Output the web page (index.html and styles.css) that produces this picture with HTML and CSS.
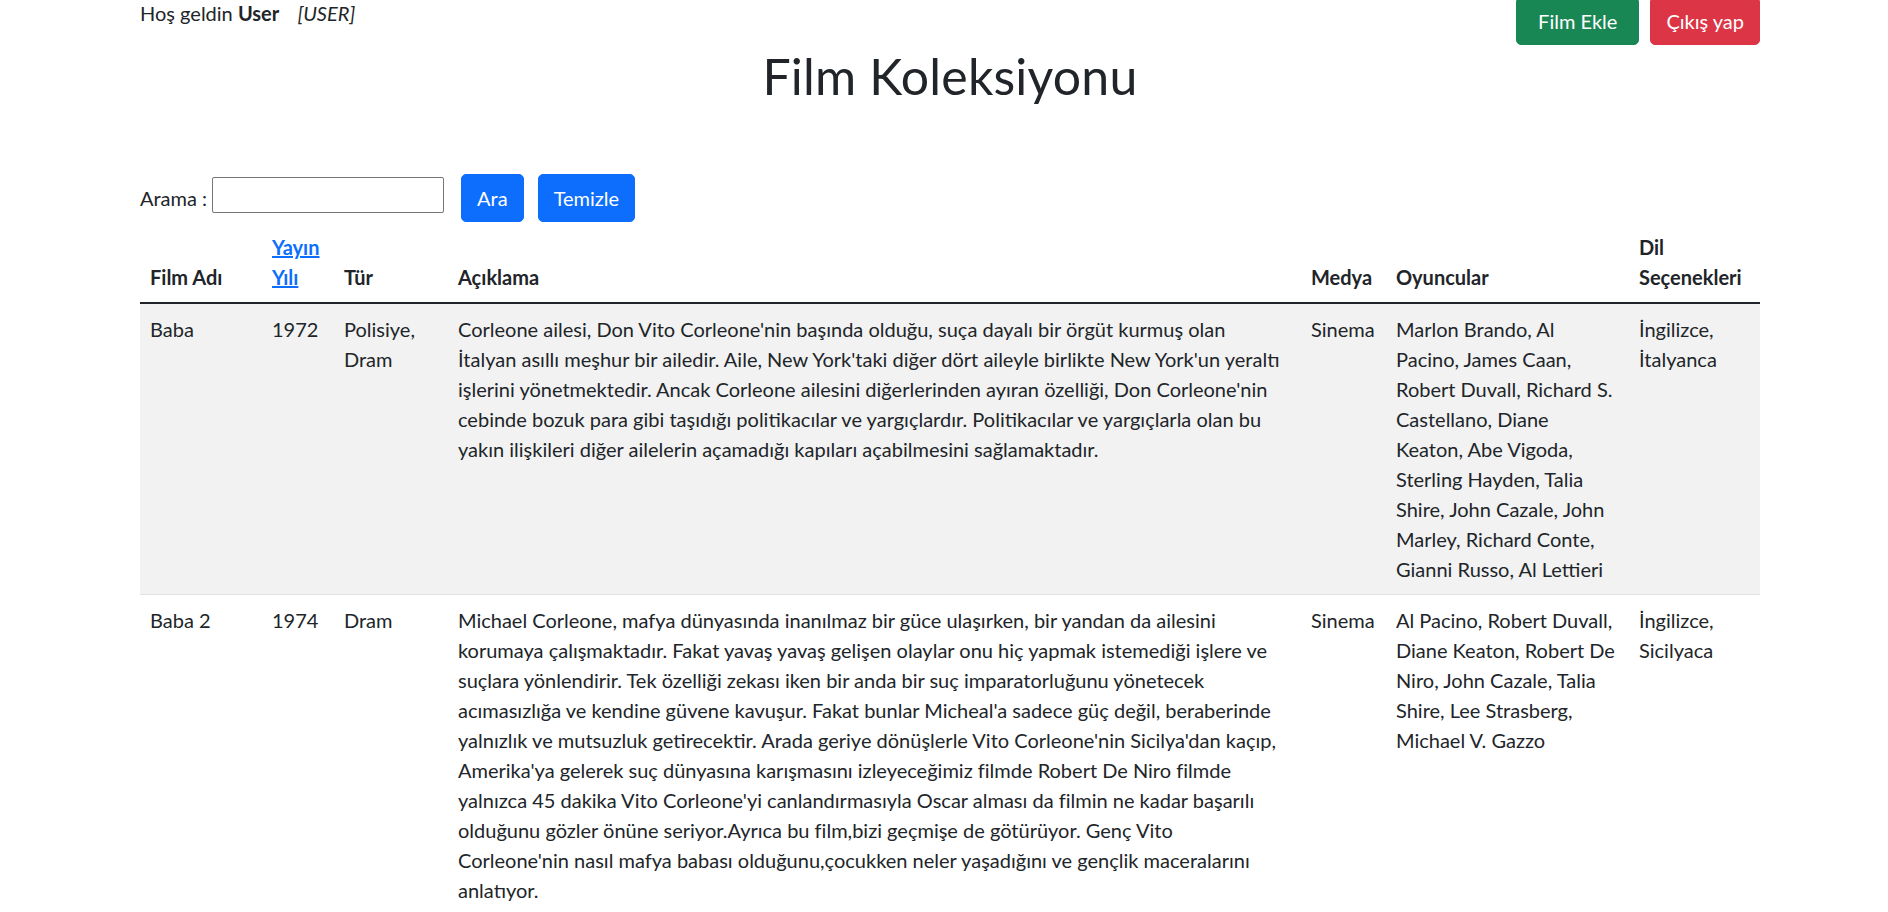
FILE: index.html
```html
<!DOCTYPE html>
<html lang="tr">
<head>
<meta charset="utf-8">
<title>Film Koleksiyonu</title>
<link rel="stylesheet" href="styles.css">
</head>
<body>
<div class="page">
  <div class="topbar">
    <div class="greeting">Hoş geldin <b>User</b> <i class="role">[USER]</i></div>
    <div class="actions">
      <a class="btn btn-success btn-add" href="#">Film Ekle</a>
      <a class="btn btn-danger" href="#">Çıkış yap</a>
    </div>
  </div>

  <h1 class="title">Film Koleksiyonu</h1>

  <form class="search">
    <label class="search-label" for="q">Arama :</label>
    <input class="search-input" id="q" type="text">
    <button class="btn btn-primary" type="button">Ara</button>
    <button class="btn btn-primary" type="button">Temizle</button>
  </form>

  <table class="films">
    <colgroup>
      <col class="c-name">
      <col class="c-year">
      <col class="c-genre">
      <col class="c-desc">
      <col class="c-media">
      <col class="c-cast">
      <col class="c-lang">
    </colgroup>
    <thead>
      <tr>
        <th>Film Adı</th>
        <th><a class="sort" href="#">Yayın Yılı</a></th>
        <th>Tür</th>
        <th>Açıklama</th>
        <th>Medya</th>
        <th>Oyuncular</th>
        <th>Dil Seçenekleri</th>
      </tr>
    </thead>
    <tbody>
      <tr class="striped">
        <td>Baba</td>
        <td>1972</td>
        <td>Polisiye, Dram</td>
        <td class="desc">Corleone ailesi, Don Vito Corleone'nin başında olduğu, suça dayalı bir örgüt kurmuş olan İtalyan asıllı meşhur bir ailedir. Aile, New York'taki diğer dört aileyle birlikte New York'un yeraltı işlerini yönetmektedir. Ancak Corleone ailesini diğerlerinden ayıran özelliği, Don Corleone'nin cebinde bozuk para gibi taşıdığı politikacılar ve yargıçlardır. Politikacılar ve yargıçlarla olan bu yakın ilişkileri diğer ailelerin açamadığı kapıları açabilmesini sağlamaktadır.</td>
        <td>Sinema</td>
        <td>Marlon Brando, Al Pacino, James Caan, Robert Duvall, Richard S. Castellano, Diane Keaton, Abe Vigoda, Sterling Hayden, Talia Shire, John Cazale, John Marley, Richard Conte, Gianni Russo, Al Lettieri</td>
        <td>İngilizce, İtalyanca</td>
      </tr>
      <tr>
        <td>Baba 2</td>
        <td>1974</td>
        <td>Dram</td>
        <td class="desc">Michael Corleone, mafya dünyasında inanılmaz bir güce ulaşırken, bir yandan da ailesini korumaya çalışmaktadır. Fakat yavaş yavaş gelişen olaylar onu hiç yapmak istemediği işlere ve suçlara yönlendirir. Tek özelliği zekası iken bir anda bir suç imparatorluğunu yönetecek acımasızlığa ve kendine güvene kavuşur. Fakat bunlar Micheal'a sadece güç değil, beraberinde yalnızlık ve mutsuzluk getirecektir. Arada geriye dönüşlerle Vito Corleone'nin Sicilya'dan kaçıp, Amerika'ya gelerek suç dünyasına karışmasını izleyeceğimiz filmde Robert De Niro filmde yalnızca 45 dakika Vito Corleone'yi canlandırmasıyla Oscar alması da filmin ne kadar başarılı olduğunu gözler önüne seriyor.Ayrıca bu film,bizi geçmişe de götürüyor. Genç Vito Corleone'nin nasıl mafya babası olduğunu,çocukken neler yaşadığını ve gençlik maceralarını anlatıyor.</td>
        <td>Sinema</td>
        <td>Al Pacino, Robert Duvall, Diane Keaton, Robert De Niro, John Cazale, Talia Shire, Lee Strasberg, Michael V. Gazzo</td>
        <td>İngilizce, Sicilyaca</td>
      </tr>
    </tbody>
  </table>
</div>
</body>
</html>
```
FILE: styles.css
```css
* { box-sizing: border-box; }

html, body {
  margin: 0;
  padding: 0;
  background: #fff;
}

body {
  font-family: Lato, Roboto, "Liberation Sans", Arial, sans-serif;
  font-size: 20px;
  line-height: 30px;
  color: #212529;
}

.page {
  margin: -3px 128px 0 140px;
}

/* top bar */
.topbar {
  display: flex;
  justify-content: space-between;
  align-items: flex-start;
}

.greeting {
  padding-top: 1px;
}

.greeting b { font-weight: 700; }

.role {
  margin-left: 13px;
}

.actions {
  display: flex;
  gap: 11px;
}

/* buttons */
.btn {
  display: inline-block;
  font-family: inherit;
  font-size: 20px;
  line-height: 30px;
  font-weight: 400;
  padding: 8px 15px;
  border: 1px solid transparent;
  border-radius: 5px;
  color: #fff;
  text-decoration: none;
  text-align: center;
  cursor: pointer;
}

.btn-add { padding-left: 21px; padding-right: 21px; }

.btn-success { background: #198754; border-color: #198754; }
.btn-danger  { background: #dc3545; border-color: #dc3545; }
.btn-primary { background: #0d6efd; border-color: #0d6efd; }

/* title */
.title {
  margin: 1px 0 0;
  text-align: center;
  font-size: 50px;
  line-height: 60px;
  font-weight: 400;
  letter-spacing: 0.2px;
  color: #212529;
}

/* search */
.search {
  display: flex;
  align-items: center;
  margin-top: 68px;
}

.search-label {
  margin-right: 5px;
}

.search-input {
  width: 232px;
  height: 36px;
  margin: 0 17px 7px 0;
  padding: 1px 3px;
  font-family: inherit;
  font-size: 17px;
  border: 1px solid #767676;
  border-radius: 2px;
  background: #fff;
}

.search .btn + .btn {
  margin-left: 14px;
}

/* table */
.films {
  width: 1620px;
  table-layout: fixed;
  border-collapse: collapse;
  color: #212529;
}

.c-name  { width: 122px; }
.c-year  { width: 72px; }
.c-genre { width: 114px; }
.c-desc  { width: 853px; }
.c-media { width: 85px; }
.c-cast  { width: 243px; }
.c-lang  { width: 131px; }

.films th,
.films td {
  padding: 10px;
  text-align: left;
}

.films th {
  font-weight: 700;
  vertical-align: bottom;
  border-bottom: 2px solid #212529;
}

.films td {
  vertical-align: top;
  border-bottom: 1px solid #dee2e6;
}

.films td.desc {
  padding-right: 14px;
}

.films tr.striped td {
  background: #f2f2f2;
}

.sort {
  color: #0d6efd;
  text-decoration: underline;
}
```
